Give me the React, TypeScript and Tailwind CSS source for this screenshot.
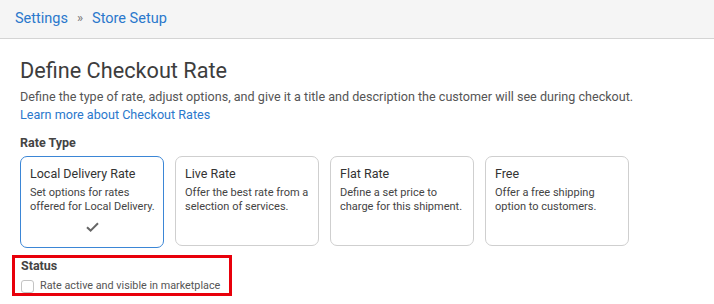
import React from "react";

const cards = [
  { title: "Local Delivery Rate", desc: ["Set options for rates", "offered for Local Delivery."], selected: true },
  { title: "Live Rate", desc: ["Offer the best rate from a", "selection of services."], selected: false },
  { title: "Flat Rate", desc: ["Define a set price to", "charge for this shipment."], selected: false },
  { title: "Free", desc: ["Offer a free shipping", "option to customers."], selected: false },
];

export default function App() {
  return (
    <div className="w-[714px] h-[304px] bg-white overflow-hidden" style={{ fontFamily: "Roboto, 'Liberation Sans', sans-serif" }}>
      <div className="h-[39px] bg-[#f5f5f5] border-b border-[#d4d4d4] flex items-center px-[15px] text-[14.5px] text-[#2a78cc]">
        <span>Settings</span>
        <span className="mx-[9px] text-[#777] text-[13px] -mt-[3px]">»</span>
        <span>Store Setup</span>
      </div>
      <div className="pl-5 pt-[19px]">
        <h1 className="text-[21.7px] leading-[26px] text-[#3d3d3d] font-normal whitespace-nowrap">Define Checkout Rate</h1>
        <p className="mt-[4px] text-[12.6px] leading-[18px] text-[#555] whitespace-nowrap">
          Define the type of rate, adjust options, and give it a title and description the customer will see during checkout.
        </p>
        <p className="text-[12.6px] leading-[18px] text-[#2a78cc] whitespace-nowrap">Learn more about Checkout Rates</p>
        <div className="mt-[10px] text-[12.5px] leading-[18px] font-bold text-[#444]">Rate Type</div>
        <div className="mt-[4px] flex items-start gap-[11px]">
          {cards.map((c) => (
            <div
              key={c.title}
              className={
                c.selected
                  ? "w-[144px] h-[92px] rounded-[7px] border border-[#3b86d6] px-[9px] pt-[8px] flex flex-col"
                  : "w-[144px] h-[90px] rounded-[7px] border border-[#cfcfcf] px-[9px] pt-[8px] flex flex-col"
              }
            >
              <div className="text-[12.5px] leading-[18px] text-[#333] whitespace-nowrap">{c.title}</div>
              <div className="mt-[3px] text-[11px] leading-[14px] text-[#444] whitespace-nowrap">
                {c.desc[0]}
                <br />
                {c.desc[1]}
              </div>
              {c.selected && (
                <div className="flex justify-center mt-[8px]">
                  <svg width="13" height="10" viewBox="0 0 13 10">
                    <path d="M1 5.2 L4.6 8.6 L12 1.2" fill="none" stroke="#666" strokeWidth="2" />
                  </svg>
                </div>
              )}
            </div>
          ))}
        </div>
        <div className="-ml-[8px] mt-[7px] w-[220px] h-[41px] border-[3px] border-[#e8000b] pl-[6px] pt-0">
          <div className="text-[12.5px] leading-[16px] font-bold text-[#444]">Status</div>
          <div className="mt-[5px] flex items-center gap-[6px]">
            <div className="w-[13px] h-[13px] shrink-0 rounded-[3px] border border-[#c4c4c4] bg-white" />
            <span className="text-[10.8px] leading-[14px] text-[#555] whitespace-nowrap">Rate active and visible in marketplace</span>
          </div>
        </div>
      </div>
    </div>
  );
}
